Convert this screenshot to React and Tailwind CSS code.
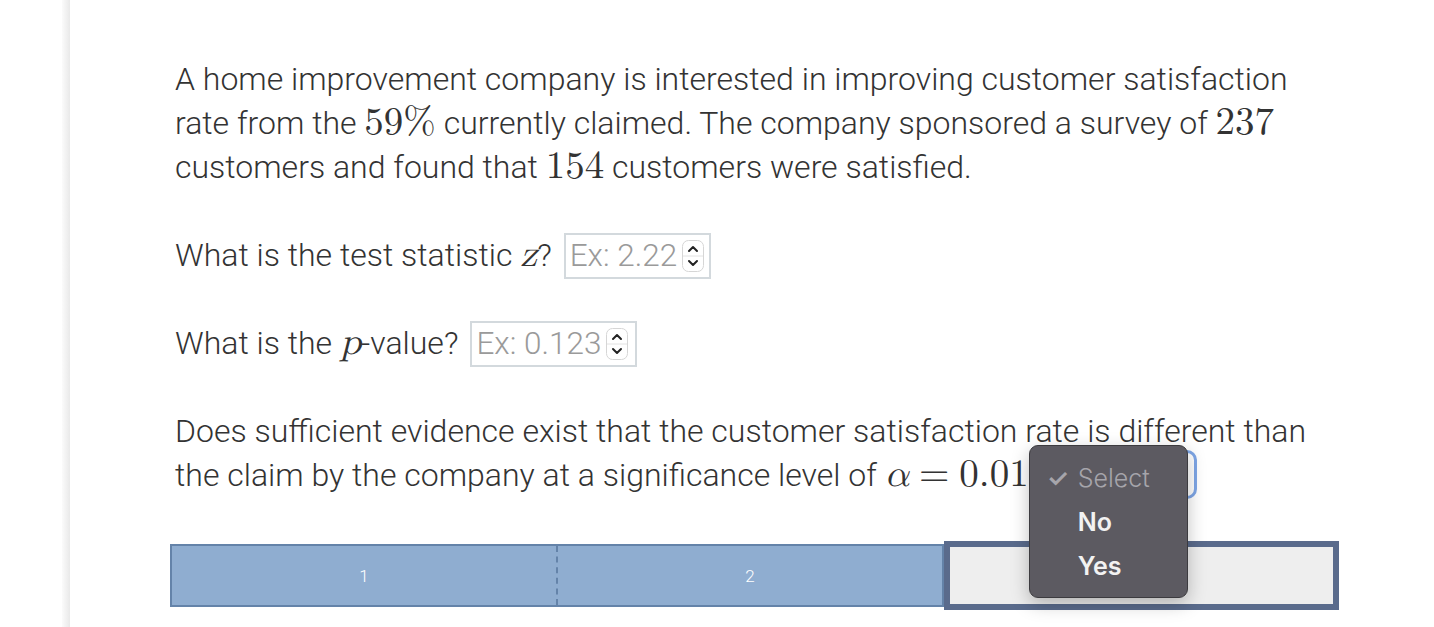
import { useState } from 'react'

const body = { fontFamily: 'Roboto, "Noto Sans", sans-serif' }
const math = { fontFamily: '"Latin Modern Math", "DejaVu Serif", "Liberation Serif", serif' }
const menuFont = { fontFamily: 'Inter, "Noto Sans", sans-serif' }

function M({ children, italic }) {
  return (
    <span className={italic ? 'italic text-[38px] leading-none' : 'text-[39px] leading-none'} style={math}>
      {children}
    </span>
  )
}

function Spinner() {
  return (
    <svg className="h-[32px] w-[22px] flex-shrink-0" viewBox="0 0 22 32" fill="none">
      <rect x="0.5" y="0.5" width="21" height="31" rx="6" fill="#fff" stroke="#d6d6d6" />
      <line x1="1" y1="16" x2="21" y2="16" stroke="#e2e2e2" />
      <path d="M7 11l4-4 4 4" stroke="#222" strokeWidth="2" strokeLinecap="round" strokeLinejoin="round" />
      <path d="M7 21l4 4 4-4" stroke="#222" strokeWidth="2" strokeLinecap="round" strokeLinejoin="round" />
    </svg>
  )
}

function NumberBox({ placeholder, width }) {
  return (
    <span
      className="inline-flex items-center gap-[5px] h-[46px] border-2 border-[#d3d9dd] pl-[4px] align-middle ml-[12px] -mt-[4px]"
      style={{ width }}
    >
      <span className="text-[31.5px] font-light text-[#9a9a9a] leading-none">{placeholder}</span>
      <Spinner />
    </span>
  )
}

function OpenSelect() {
  const options = ['Select', 'No', 'Yes']
  const [picked] = useState(0)
  return (
    <span className="relative inline-block align-middle ml-[1px] w-[167px] h-[49px] rounded-[10px] border-[3px] border-[#7ea6e6] bg-white -mt-[6px]">
      <div
        className="absolute left-[-4px] top-[-8px] w-[159px] h-[153px] rounded-[9px] bg-[#5c5a61] border border-[#3c3b3f] shadow-[0_6px_18px_rgba(0,0,0,0.25)] pt-[10px] z-10"
        style={menuFont}
      >
        {options.map((o, i) => (
          <div key={o} className="flex items-center h-[44px] text-[25px] leading-none">
            <span className="w-[48px] pl-[17px] text-[#a6a5ab] font-semibold">{i === picked ? '✓' : ''}</span>
            <span className={i === picked ? 'text-[#a6a5ab]' : 'text-[#f2f2f2] font-semibold'}>{o}</span>
          </div>
        ))}
      </div>
    </span>
  )
}

function ProgressBar() {
  return (
    <div className="flex items-center h-[69px] mt-[44px] ml-[-5px]">
      <div className="flex h-[63px] border-2 border-[#6483a9] bg-[#8fadd0]">
        <div className="w-[386px] flex items-center justify-center text-white text-[17px] border-r-2 border-dashed border-[#6483a9]">
          1
        </div>
        <div className="w-[384px] flex items-center justify-center text-white text-[17px]">2</div>
      </div>
      <div className="w-[395px] h-[69px] border-[6px] border-[#5a6b8c] bg-[#eeeeee]" />
    </div>
  )
}

export default function App() {
  return (
    <div className="flex w-[1434px] h-[627px] overflow-hidden bg-white" style={body}>
      <div className="w-[62px] flex-shrink-0 bg-white" />
      <div className="w-[8px] flex-shrink-0 bg-gradient-to-r from-[#fbfbfb] to-[#e9e9e9]" />
      <div className="flex-1 pl-[105px] pt-[57px] text-[32px] font-light leading-[44px] text-[#333333] whitespace-nowrap">
        <p className="h-[132px]">
          A home improvement company is interested in improving customer satisfaction
          <br />
          rate from the <M>59%</M> currently claimed. The company sponsored a survey of <M>237</M>
          <br />
          customers and found that <M>154</M> customers were satisfied.
        </p>

        <p className="h-[44px] mt-[44px]">
          What is the test statistic <M italic>z</M>?
          <NumberBox placeholder="Ex: 2.22" width={147} />
        </p>

        <p className="h-[44px] mt-[44px]">
          What is the <M italic>p</M>-value?
          <NumberBox placeholder="Ex: 0.123" width={167} />
        </p>

        <p className="h-[88px] mt-[44px]">
          Does sufficient evidence exist that the customer satisfaction rate is different than
          <br />
          the claim by the company at a significance level of <M italic>α</M>
          <span className="inline-block w-[10px]" />
          <M>=</M>
          <span className="inline-block w-[10px]" />
          <M>0.01</M>
          <OpenSelect />
        </p>

        <ProgressBar />
      </div>
    </div>
  )
}
